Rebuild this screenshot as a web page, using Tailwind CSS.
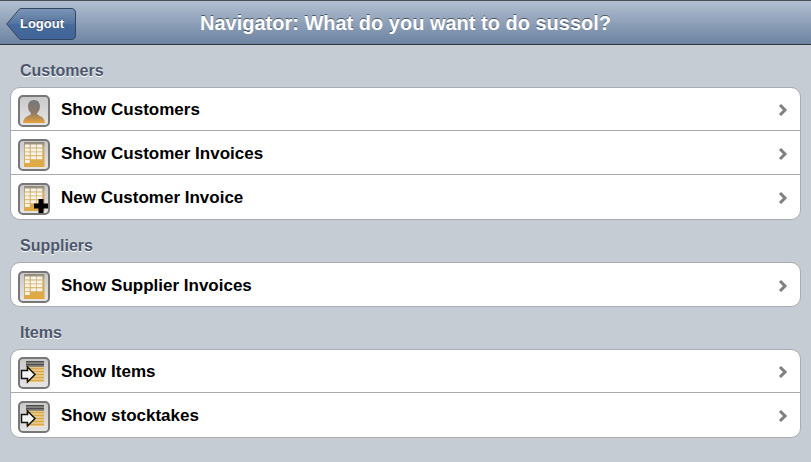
<!DOCTYPE html>
<html lang="en">
<head>
<meta charset="UTF-8">
<title>Navigator</title>
<script src="https://cdn.jsdelivr.net/npm/@tailwindcss/browser@4"></script>
</head>
<body class="w-[811px] h-[462px] overflow-hidden bg-[#c5ccd4] font-['Liberation_Sans',Arial,sans-serif]">
  <svg width="0" height="0" class="absolute">
    <defs>
      <linearGradient id="tile" x1="0" y1="0" x2="0" y2="1"><stop offset="0" stop-color="#c8c8c8"/><stop offset="1" stop-color="#e6e6e6"/></linearGradient>
      <linearGradient id="person" x1="0" y1="0" x2="0" y2="1"><stop offset="0" stop-color="#77777a"/><stop offset="0.55" stop-color="#8e7a68"/><stop offset="1" stop-color="#e8a23c"/></linearGradient>
      <linearGradient id="sheet" x1="0" y1="0" x2="0" y2="1"><stop offset="0" stop-color="#8c8880"/><stop offset="0.25" stop-color="#cdb070"/><stop offset="1" stop-color="#e2a83e"/></linearGradient>
      <linearGradient id="btn" x1="0" y1="0" x2="0" y2="1"><stop offset="0" stop-color="#7d95b8"/><stop offset="0.5" stop-color="#54749f"/><stop offset="0.52" stop-color="#466a9b"/><stop offset="1" stop-color="#3f6498"/></linearGradient>
      <symbol id="grid" viewBox="0 0 32 32">
        <rect x="1" y="1" width="30" height="30" rx="4" fill="url(#tile)" stroke="#777" stroke-width="2"/>
        <rect x="6" y="3" width="20.500" height="25" fill="url(#sheet)"/>
        <path d="M7 5.500h4.700v3h-4.700zM12.700 5.500h5.300v3h-5.300zM18.700 5.500h5.600v3h-5.600zM7 9.400h4.700v3h-4.700zM12.700 9.400h5.300v3h-5.300zM18.700 9.400h5.600v3h-5.600zM7 13.300h4.700v3h-4.700zM12.700 13.300h5.300v3h-5.300zM18.700 13.300h5.600v3h-5.600zM7 17.200h4.700v3h-4.700zM12.700 17.200h5.300v3h-5.300zM18.700 17.200h5.600v3h-5.600zM7 21.100h4.700v3h-4.700z" fill="#f8f3e6"/>
      </symbol>
      <symbol id="items" viewBox="0 0 32 32">
        <rect x="1" y="1" width="30" height="30" rx="4" fill="url(#tile)" stroke="#777" stroke-width="2"/>
        <rect x="8" y="4" width="18" height="22" fill="#efe4c8"/>
        <rect x="8" y="4" width="18" height="6" fill="#8a8780"/>
        <path d="M8 4h18v1.200h-18zM8 7h18v1.200h-18z" fill="#4e4e4e"/>
        <path d="M8 10.500h18v2h-18zM8 13.500h18v2h-18zM8 16.500h18v2h-18zM8 19.500h18v2h-18zM8 22.500h18v2h-18z" fill="#dca844"/>
        <path d="M3.500 13.500h6v-3.500l7.500 7.500l-7.500 7.500v-3.500h-6z" fill="#f4f4f4" stroke="#111" stroke-width="1.500"/>
      </symbol>
    </defs>
  </svg>

  <header class="relative h-[45px] border-t border-t-[#4a4f57] border-b border-b-[#2d3642] bg-gradient-to-b from-[#b2bfd0] to-[#6d83a1] flex items-center justify-center">
    <button class="absolute left-[6px] top-[7px] w-[70px] h-[32px] text-white text-[13px] font-bold pl-[2px] [text-shadow:0_-1px_0_rgba(0,0,0,0.5)]">
      <svg class="absolute inset-0" width="70" height="32" viewBox="0 0 70 32"><path d="M0.700 16L13 1.500Q13.500 0.500 15 0.500H65Q69.500 0.500 69.500 5V27Q69.500 31.500 65 31.500H15Q13.500 31.500 13 30.500Z" fill="url(#btn)" stroke="#34455f"/></svg>
      <span class="relative">Logout</span>
    </button>
    <h1 class="text-[20px] font-bold text-white [text-shadow:0_-1px_0_rgba(0,0,0,0.5)]">Navigator: What do you want to do sussol?</h1>
  </header>

  <main class="px-[10px]">
    <h2 class="text-[16px] font-bold text-[#4c566c] pl-[10px] pt-[18px] pb-[8px] leading-[16px] [text-shadow:0_1px_0_#fff]">Customers</h2>
    <ul class="bg-white rounded-[10px] border border-[#a9abae] divide-y divide-[#a9abae]">
      <li class="h-[43px] flex items-center pt-[2px] pl-[7px] pr-[12px]">
        <svg width="32" height="32" viewBox="0 0 32 32" class="mr-[11px] mt-[2px]">
          <rect x="1" y="1" width="30" height="30" rx="4" fill="url(#tile)" stroke="#777" stroke-width="2"/>
          <path d="M16 5c3.800 0 6 2.800 6 6.500c0 3-1.500 5.300-3 6.500c0 1.500 1 2 3 3c3 1 4.500 3 5 7h-22c0.500-4 2-6 5-7c2-1 3-1.500 3-3c-1.500-1.200-3-3.500-3-6.500c0-3.700 2.200-6.500 6-6.500z" fill="url(#person)"/>
        </svg>
        <span class="flex-1 text-[17px] font-bold text-black">Show Customers</span>
        <svg width="10" height="14" viewBox="0 0 10 14"><path d="M2 2l5 5l-5 5" fill="none" stroke="#7f7f7f" stroke-width="3"/></svg>
      </li>
      <li class="h-[44px] flex items-center pt-[2px] pl-[7px] pr-[12px]">
        <svg width="32" height="32" class="mr-[11px] mt-[2px]"><use href="#grid"/></svg>
        <span class="flex-1 text-[17px] font-bold text-black">Show Customer Invoices</span>
        <svg width="10" height="14" viewBox="0 0 10 14"><path d="M2 2l5 5l-5 5" fill="none" stroke="#7f7f7f" stroke-width="3"/></svg>
      </li>
      <li class="h-[44px] flex items-center pt-[2px] pl-[7px] pr-[12px]">
        <svg width="32" height="32" viewBox="0 0 32 32" class="mr-[11px] mt-[2px]">
          <use href="#grid" width="32" height="32"/>
          <path d="M20.500 16h5v4.500h4.500v5h-4.500v4.500h-5v-4.500h-4.500v-5h4.500z" fill="#000"/>
        </svg>
        <span class="flex-1 text-[17px] font-bold text-black">New Customer Invoice</span>
        <svg width="10" height="14" viewBox="0 0 10 14"><path d="M2 2l5 5l-5 5" fill="none" stroke="#7f7f7f" stroke-width="3"/></svg>
      </li>
    </ul>

    <h2 class="text-[16px] font-bold text-[#4c566c] pl-[10px] pt-[18px] pb-[8px] leading-[16px] [text-shadow:0_1px_0_#fff]">Suppliers</h2>
    <ul class="bg-white rounded-[10px] border border-[#a9abae] divide-y divide-[#a9abae]">
      <li class="h-[43px] flex items-center pt-[2px] pl-[7px] pr-[12px]">
        <svg width="32" height="32" class="mr-[11px] mt-[2px]"><use href="#grid"/></svg>
        <span class="flex-1 text-[17px] font-bold text-black">Show Supplier Invoices</span>
        <svg width="10" height="14" viewBox="0 0 10 14"><path d="M2 2l5 5l-5 5" fill="none" stroke="#7f7f7f" stroke-width="3"/></svg>
      </li>
    </ul>

    <h2 class="text-[16px] font-bold text-[#4c566c] pl-[10px] pt-[18px] pb-[8px] leading-[16px] [text-shadow:0_1px_0_#fff]">Items</h2>
    <ul class="bg-white rounded-[10px] border border-[#a9abae] divide-y divide-[#a9abae]">
      <li class="h-[43px] flex items-center pt-[2px] pl-[7px] pr-[12px]">
        <svg width="32" height="32" class="mr-[11px] mt-[2px]"><use href="#items"/></svg>
        <span class="flex-1 text-[17px] font-bold text-black">Show Items</span>
        <svg width="10" height="14" viewBox="0 0 10 14"><path d="M2 2l5 5l-5 5" fill="none" stroke="#7f7f7f" stroke-width="3"/></svg>
      </li>
      <li class="h-[44px] flex items-center pt-[2px] pl-[7px] pr-[12px]">
        <svg width="32" height="32" class="mr-[11px] mt-[2px]"><use href="#items"/></svg>
        <span class="flex-1 text-[17px] font-bold text-black">Show stocktakes</span>
        <svg width="10" height="14" viewBox="0 0 10 14"><path d="M2 2l5 5l-5 5" fill="none" stroke="#7f7f7f" stroke-width="3"/></svg>
      </li>
    </ul>
  </main>
</body>
</html>
